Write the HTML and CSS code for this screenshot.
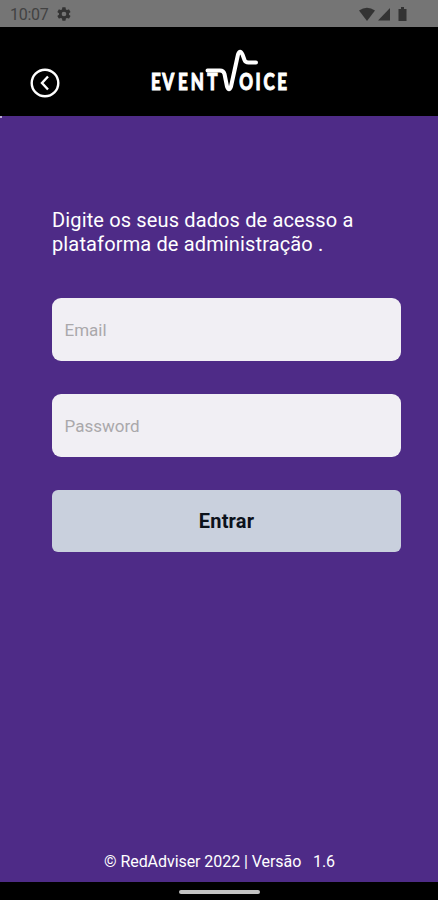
FILE: index.html
```
<!DOCTYPE html>
<html lang="pt">
<head>
    <meta charset="UTF-8">
    <meta name="viewport" content="width=device-width, initial-scale=1.0">
    <title>EventVoice</title>
    <link rel="stylesheet" href="styles.css">
</head>
<body>
    <div class="status-bar">
        <span class="clock">10:07</span>
        <svg class="gear" width="16" height="16" viewBox="0 0 24 24">
            <path fill-rule="evenodd" d="M19.4 13l.1-1-.1-1 2.1-1.6c.2-.2.3-.4.1-.7l-2-3.4c-.1-.2-.4-.3-.6-.2l-2.5 1a7 7 0 0 0-1.7-1l-.4-2.6c0-.3-.2-.5-.5-.5h-4c-.3 0-.4.2-.5.5L9 5.1a7 7 0 0 0-1.7 1l-2.5-1c-.2-.1-.5 0-.6.2l-2 3.4c-.1.3-.1.5.1.7L4.500 11l-.1 1 .1 1-2.200 1.600c-.2.2-.2.4-.1.7l2 3.4c.1.2.4.3.6.2l2.500-1a7 7 0 0 0 1.700 1l.4 2.600c.1.3.2.5.5.5h4c.3 0 .5-.2.5-.5l.4-2.600a7 7 0 0 0 1.700-1l2.500 1c.2.1.5 0 .6-.2l2-3.400c.2-.3.1-.5-.1-.7zM12 15.500a3.500 3.500 0 1 1 0-7 3.500 3.500 0 0 1 0 7z"/>
        </svg>
        <svg class="signals" width="50" height="16" viewBox="0 0 50 16">
            <path d="M0 4.500Q8-1 16 4.500L8 15z"/>
            <path d="M19 14.500L31 2v12.500z"/>
            <path d="M39.500 3H42V1h3v2h2.500v12h-8z"/>
        </svg>
    </div>

    <div class="header">
        <button class="back-button" aria-label="Voltar">
            <svg width="30" height="30" viewBox="0 0 30 30">
                <circle cx="15" cy="15" r="13.3"/>
                <path d="M18 8.500L12 15l6 6.500"/>
            </svg>
        </button>
        <svg class="logo" width="140" height="46" viewBox="0 0 140 46">
            <g transform="scale(.74 1)">
                <text y="42" x="1.500 16.500 38 55 77.500">EVENT</text>
                <text y="42" x="120.500 142.500 153.500 172">OICE</text>
            </g>
            <path d="M57.500 22.500H70Q73.500 22.500 74.500 26L77 38.500Q79 44 81 38.500L88 6.500Q90 1 92.500 6.500L94.500 12Q95.500 14.500 98.500 14.500H106"/>
        </svg>
    </div>

    <div class="content">
        <p class="intro">Digite os seus dados de acesso a<br>plataforma de administração .</p>
        <form class="login-form">
            <input class="field" type="email" placeholder="Email">
            <input class="field" type="password" placeholder="Password">
            <button class="submit-button" type="button">Entrar</button>
        </form>
        <div class="footer">© RedAdviser 2022 | Versão &nbsp; 1.6</div>
    </div>

    <div class="nav-bar"><div class="home-handle"></div></div>
</body>
</html>
```
FILE: styles.css
```
* {
    box-sizing: border-box;
}

body {
    font-family: Roboto, sans-serif;
    margin: 0;
    height: 900px;
    display: flex;
    flex-direction: column;
    overflow: hidden;
    background-color: #4e2b87;
    color: #fff;
}

.status-bar {
    height: 27px;
    display: flex;
    align-items: center;
    padding: 1px 29px 0 10px;
    background-color: #757575;
    color: #424242;
    font-size: 16px;
}

.clock {
    letter-spacing: -0.3px;
}

.status-bar svg {
    fill: #333;
}

.gear {
    margin-left: 8px;
}

.signals {
    margin-left: auto;
}

.header {
    height: 89px;
    display: flex;
    background-color: #000;
}

.back-button {
    width: 30px;
    height: 30px;
    margin: 41px 0 0 30px;
    padding: 0;
    border: none;
    background: none;
}

.back-button svg {
    display: block;
    fill: none;
    stroke: #fff;
    stroke-width: 2.4;
}

.logo {
    margin: 21px 0 0 90px;
    font-family: Lato, sans-serif;
    font-size: 23px;
    font-weight: 900;
    fill: #fff;
}

.logo text {
    stroke: #fff;
    stroke-width: 1;
}

.logo path {
    fill: none;
    stroke: #fff;
    stroke-width: 4;
    stroke-linecap: round;
    stroke-linejoin: round;
}

.content {
    flex: 1;
    display: flex;
    flex-direction: column;
    padding: 92px 37px 10px 52px;
    /* small light corner under the header */
    background: linear-gradient(#b9a9d4, #b9a9d4) 0 0 / 2px 2px no-repeat;
}

.intro {
    margin: 0;
    font-size: 20px;
    line-height: 24px;
    letter-spacing: 0.14px;
}

.login-form {
    display: flex;
    flex-direction: column;
    gap: 33px;
    margin-top: 42px;
}

.field {
    height: 63px;
    padding: 1px 12.5px 0;
    border: none;
    border-radius: 9px;
    background-color: #f1eff4;
    font-family: inherit;
    font-size: 17px;
}

.field::placeholder {
    color: #aaa8ab;
}

.submit-button {
    height: 62px;
    padding: 0;
    border: none;
    border-radius: 6px;
    background-color: #c9d0dd;
    color: #0c121b;
    font-family: inherit;
    font-size: 20px;
    font-weight: 700;
    letter-spacing: 0.2px;
}

.footer {
    margin-top: auto;
    margin-left: 52px;
    font-size: 16px;
    line-height: 20px;
    letter-spacing: -0.06px;
}

.nav-bar {
    height: 18px;
    display: flex;
    justify-content: center;
    padding-top: 8px;
    background-color: #000;
}

.home-handle {
    width: 81px;
    height: 4px;
    border-radius: 2px;
    background-color: #c3c3c3;
}
```
